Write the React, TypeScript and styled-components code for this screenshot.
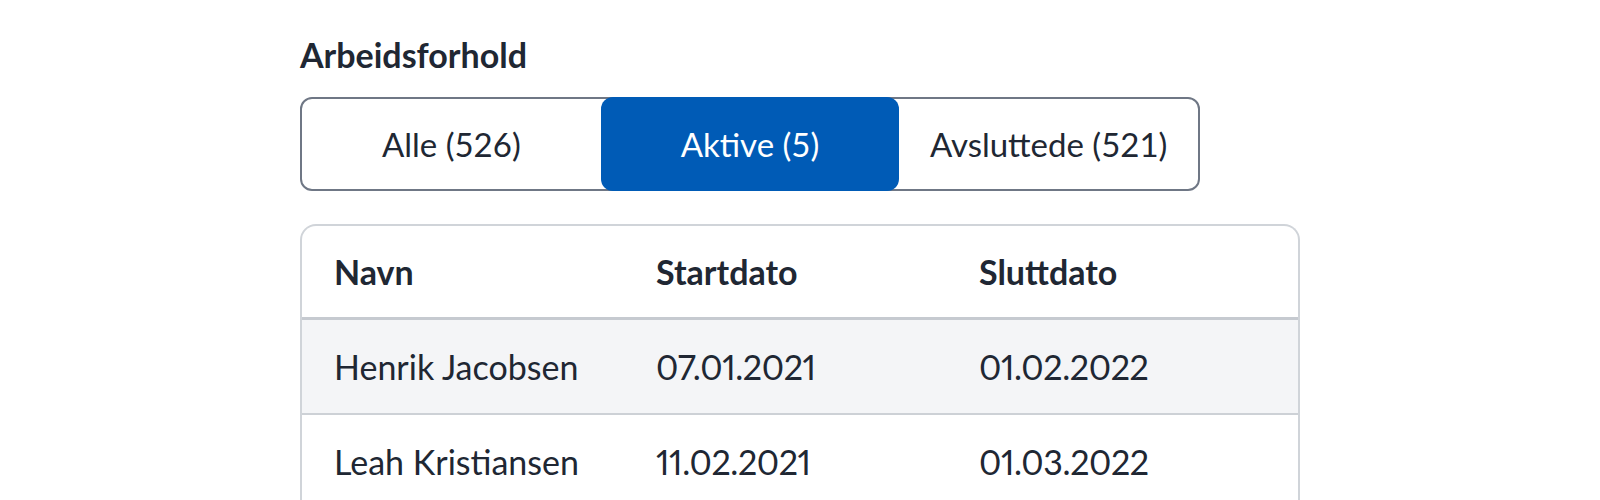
import styled, { createGlobalStyle } from 'styled-components';

const GlobalStyle = createGlobalStyle`
  body {
    margin: 0;
    background: #ffffff;
    font-family: Lato, "Noto Sans", sans-serif;
    color: #202733;
  }
`;

const Page = styled.div`
  padding: 35px 0 0 300px;
`;

const Title = styled.h2`
  margin: 0 0 22px;
  font-size: 34px;
  line-height: 40px;
  font-weight: 700;
  color: #202733;
`;

const Toggle = styled.div`
  display: grid;
  grid-template-columns: repeat(3, 1fr);
  width: 900px;
  box-sizing: border-box;
  border: 2px solid #6f7785;
  border-radius: 12px;
  margin-bottom: 33px;
`;

const ToggleButton = styled.button<{ $active?: boolean }>`
  height: ${(p) => (p.$active ? '94px' : '90px')};
  margin: ${(p) => (p.$active ? '-2px 0' : '0')};
  border: none;
  border-radius: 12px;
  background: ${(p) => (p.$active ? '#005bb6' : 'transparent')};
  color: ${(p) => (p.$active ? '#ffffff' : '#202733')};
  font-family: inherit;
  font-size: 33px;
  cursor: pointer;
`;

const Table = styled.table`
  width: 1000px;
  border-collapse: separate;
  border-spacing: 0;
  border: 2px solid #d0d4d9;
  border-bottom: none;
  border-radius: 16px 16px 0 0;
  table-layout: fixed;
  font-variant-numeric: proportional-nums;
`;

const HeadCell = styled.th`
  height: 91px;
  padding: 0 0 0 32px;
  text-align: left;
  font-size: 34px;
  font-weight: 700;
  border-bottom: 3px solid #c6cad0;
`;

const Row = styled.tr<{ $shaded?: boolean }>`
  background: ${(p) => (p.$shaded ? '#f4f5f7' : '#ffffff')};
`;

const Cell = styled.td<{ $date?: boolean }>`
  height: 93px;
  padding: 0 0 0 32px;
  font-size: 34px;
  letter-spacing: ${(p) => (p.$date ? '-0.4px' : '0')};
  border-bottom: 2px solid #cdd1d6;
`;

const rows = [
  { name: 'Henrik Jacobsen', start: '07.01.2021', end: '01.02.2022' },
  { name: 'Leah Kristiansen', start: '11.02.2021', end: '01.03.2022' },
];

export default function App() {
  return (
    <>
      <GlobalStyle />
      <Page>
        <Title>Arbeidsforhold</Title>
        <Toggle>
          <ToggleButton>Alle (526)</ToggleButton>
          <ToggleButton $active>Aktive (5)</ToggleButton>
          <ToggleButton>Avsluttede (521)</ToggleButton>
        </Toggle>
        <Table>
          <colgroup>
            <col style={{ width: 322 }} />
            <col style={{ width: 323 }} />
            <col />
          </colgroup>
          <thead>
            <tr>
              <HeadCell>Navn</HeadCell>
              <HeadCell>Startdato</HeadCell>
              <HeadCell>Sluttdato</HeadCell>
            </tr>
          </thead>
          <tbody>
            {rows.map((r, i) => (
              <Row key={r.name} $shaded={i === 0}>
                <Cell>{r.name}</Cell>
                <Cell $date>{r.start}</Cell>
                <Cell $date>{r.end}</Cell>
              </Row>
            ))}
          </tbody>
        </Table>
      </Page>
    </>
  );
}
